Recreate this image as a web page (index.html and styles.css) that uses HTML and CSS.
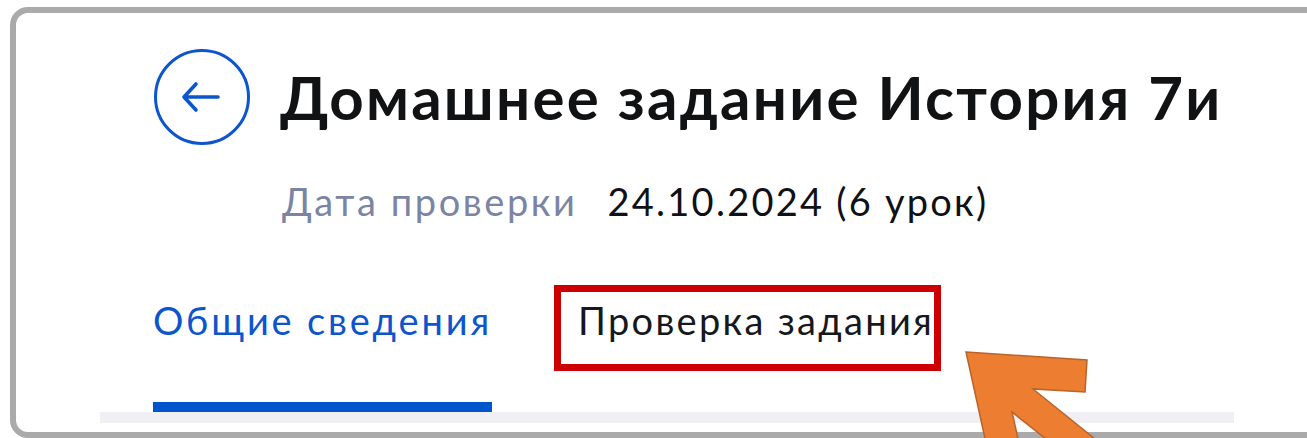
FILE: index.html
```html
<!DOCTYPE html>
<html lang="ru">
<head>
<meta charset="utf-8">
<title>Домашнее задание История 7и</title>
<link rel="stylesheet" href="styles.css">
</head>
<body>
<div class="frame">
  <header class="head">
    <button class="back" aria-label="Назад">
      <svg viewBox="0 0 96 96" width="96" height="96">
        <circle cx="48" cy="48" r="46.5" fill="none" stroke="#0c55cc" stroke-width="3"/>
        <path d="M30 48H64M42 35L30 48L42 61" fill="none" stroke="#0c55cc" stroke-width="3.6" stroke-linecap="round" stroke-linejoin="round"/>
      </svg>
    </button>
    <h1 class="title">Домашнее задание История 7и</h1>
  </header>
  <div class="meta">
    <span class="meta-label">Дата проверки</span>
    <span class="meta-value">24.10.2024 (6 урок)</span>
  </div>
  <nav class="tabs">
    <div class="tab tab-active">Общие сведения</div>
    <div class="tab tab-marked">Проверка задания</div>
  </nav>
</div>
<svg class="pointer" viewBox="950 340 160 110" width="160" height="110">
  <polygon points="966,352 1087,360 1085,392 1033,389 1100,443 1051,443 1012,412 1019,443 986,443" fill="#ed7d31" stroke="#b8652a" stroke-width="1.5" stroke-linejoin="miter"/>
</svg>
</body>
</html>
```

FILE: styles.css
```css
html, body {
  margin: 0;
  padding: 0;
  background: #ffffff;
  overflow: hidden;
}

body {
  width: 1307px;
  height: 438px;
  position: relative;
  font-family: Lato, "Noto Sans", sans-serif;
  color: #0f1114;
}

.frame {
  margin: 7px 0 0 10px;
  width: 1320px;
  height: 419px;
  border: 6px solid #aaaaaa;
  border-radius: 18px;
  background: #ffffff;
}

.head {
  display: flex;
  align-items: center;
  gap: 30px;
  padding: 36px 0 0 138px;
}

.back {
  width: 96px;
  height: 96px;
  padding: 0;
  border: 0;
  background: none;
  display: block;
}

.back svg {
  display: block;
}

.title {
  margin: 0;
  font-size: 60px;
  line-height: 72px;
  font-weight: 700;
  letter-spacing: 2.25px;
  color: #111214;
  white-space: nowrap;
}

.meta {
  display: flex;
  gap: 30px;
  margin-top: 33px;
  padding-left: 266px;
  font-size: 38px;
  line-height: 46px;
}

.meta-label {
  color: #7c84a3;
  letter-spacing: 2.6px;
}

.meta-value {
  color: #0f1114;
  letter-spacing: 2.25px;
}

.tabs {
  display: flex;
  align-items: flex-start;
  gap: 62px;
  margin: 61px 0 0 84px;
  padding-left: 53px;
  width: 1081px;
  border-bottom: 11px solid #efeff4;
  font-size: 38px;
  line-height: 46px;
}

.tab {
  padding-top: 12px;
  white-space: nowrap;
}

.tab-active {
  color: #0c55cc;
  letter-spacing: 2.85px;
  padding-bottom: 59px;
  border-bottom: 10px solid #0055cc;
}

.tab-marked {
  color: #15181c;
  letter-spacing: 2.3px;
  padding: 5px 0 21px 17px;
  border: 7px solid #cc0000;
}

.pointer {
  position: absolute;
  left: 950px;
  top: 340px;
}
```
